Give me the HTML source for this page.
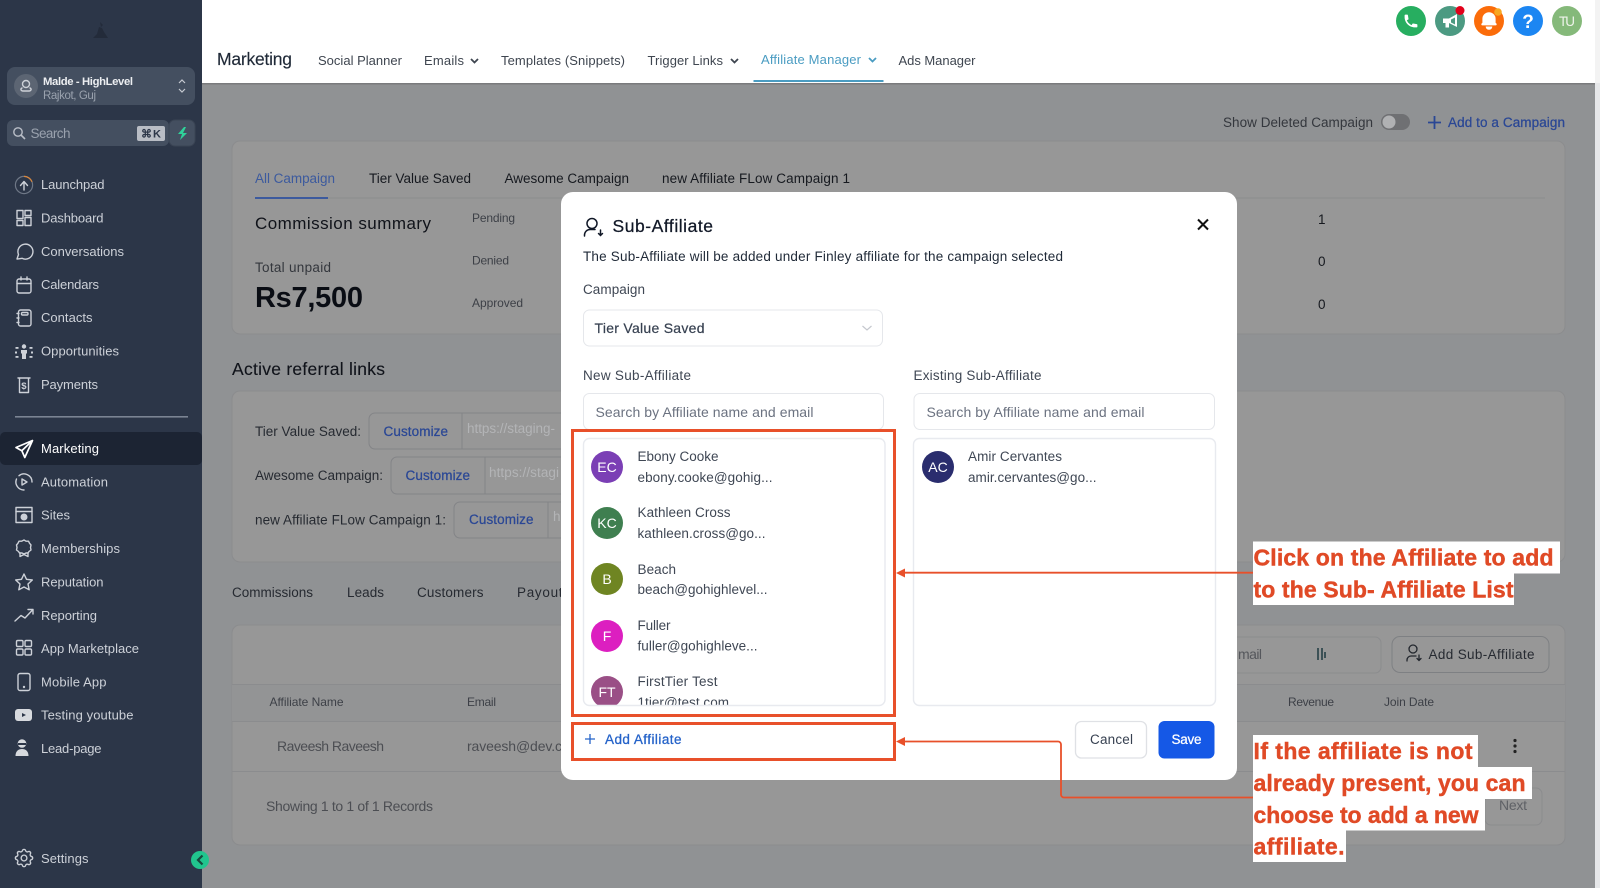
<!DOCTYPE html>
<html lang="en"><head><meta charset="utf-8"><title>Marketing - Sub-Affiliate</title>
<style>
html,body{margin:0;padding:0;width:1600px;height:888px;overflow:hidden;background:#909294}
svg{display:block;font-family:"Liberation Sans",sans-serif;filter:blur(.3px)}
.n{font-size:13px;fill:#cdd1d8}
.i{fill:none;stroke:#cdd1d8;stroke-width:1.4;stroke-linecap:round;stroke-linejoin:round}
.t{font-size:13.5px;fill:#16191f}
.g{font-size:13.5px;fill:#34373d}
.s{font-size:12px;fill:#3d4047}
.h{font-size:13px;fill:#3f4650}
.b{font-size:13.5px;fill:#2a4795;stroke:#2a4795;stroke-width:.25}
.m{font-size:13.5px;fill:#1f2937}
.l{font-size:13.5px;fill:#3f4754}
.p{font-size:14px;fill:#6b7280}
.a{font-size:14px;fill:#fff}
.x{font-size:23px;font-weight:bold;fill:#e04a26;stroke:#e04a26;stroke-width:.45}
.r{fill:#979797;stroke:#8b8c8e;stroke-width:1}
</style></head><body>
<svg width="1600" height="888" viewBox="0 0 1600 888" xmlns="http://www.w3.org/2000/svg">
<defs><clipPath id="c1"><rect x="583" y="438" width="302" height="267" rx="6"/></clipPath></defs>

<!-- page -->
<rect width="1600" height="888" fill="#909294"/>
<rect x="1595" y="83" width="5" height="805" fill="#e6e7e9"/>

<!-- sidebar -->
<rect width="202" height="888" fill="#2c3648"/>
<path d="M93 38l4-4 2-7 3 1 2 4 4 6zM100 22l3 3-2 2z" fill="#232b3a"/>
<rect x="7" y="67" width="188" height="38" rx="8" fill="#444f60"/>
<circle cx="26" cy="86" r="12" fill="#5c6573"/>
<g class="i" stroke-width="1.2"><circle cx="26" cy="84" r="3.5"/><path d="M22 88c-2 1-1 3 1 3h6c2 0 3-2 1-3"/></g>
<text x="43" y="85" font-size="11.300" font-weight="bold" fill="#eceef1" textLength="90">Malde - HighLevel</text>
<text x="43" y="99" font-size="11.500" fill="#9aa2ae" textLength="53">Rajkot, Guj</text>
<path d="M179 83l3-3 3 3M179 89l3 3 3-3" fill="none" stroke="#c6cad1" stroke-width="1.2"/>
<rect x="7" y="120" width="162" height="26" rx="6" fill="#444f60"/>
<rect x="169" y="120" width="26" height="26" rx="6" fill="#444f60" stroke="#3a4454"/>
<circle cx="18" cy="132" r="4.2" fill="none" stroke="#b9bec7" stroke-width="1.4"/><path d="M21 135l4 4" stroke="#b9bec7" stroke-width="1.6"/>
<text x="30.500" y="138" font-size="13.500" fill="#9aa2ae" textLength="40">Search</text>
<rect x="137" y="126" width="28" height="15" rx="2" fill="#b9bdc5"/>
<text x="141" y="137.5" font-size="11" fill="#2c3648" textLength="20" font-weight="bold">⌘ K</text>
<path d="M184 127l-6 7h4l-2 6 7-7h-4l3-6z" fill="#2fd39a"/>

<!-- nav -->
<text class="n" x="41" y="189" textLength="63.500">Launchpad</text>
<text class="n" x="41" y="222.5" textLength="62.500">Dashboard</text>
<text class="n" x="41" y="256" textLength="83">Conversations</text>
<text class="n" x="41" y="289" textLength="58">Calendars</text>
<text class="n" x="41" y="322" textLength="51.500">Contacts</text>
<text class="n" x="41" y="355.500" textLength="78">Opportunities</text>
<text class="n" x="41" y="389" textLength="57">Payments</text>
<rect x="15" y="416" width="173" height="1.6" fill="#7b8493"/>
<rect x="0" y="432" width="202" height="33" rx="5" fill="#1c2433"/>
<text class="n" x="41" y="453" textLength="58" style="fill:#fff">Marketing</text>
<text class="n" x="41" y="486.500" textLength="67">Automation</text>
<text class="n" x="41" y="519.500" textLength="29">Sites</text>
<text class="n" x="41" y="553" textLength="79">Memberships</text>
<text class="n" x="41" y="586.500" textLength="62.500">Reputation</text>
<text class="n" x="41" y="620" textLength="56">Reporting</text>
<text class="n" x="41" y="653" textLength="98">App Marketplace</text>
<text class="n" x="41" y="686.500" textLength="65.500">Mobile App</text>
<text class="n" x="41" y="719.500" textLength="92.500">Testing youtube</text>
<text class="n" x="41" y="753" textLength="60.500">Lead-page</text>
<text class="n" x="41" y="863" textLength="47.500">Settings</text>

<!-- nav icons -->
<g transform="translate(14 175)"><circle cx="10" cy="10" r="8.6" fill="none" stroke="#6e7786" stroke-width="1.2"/><path d="M10 1.4a8.6 8.6 0 0 1 8 5.4" fill="none" stroke="#d9853a" stroke-width="1.3"/><path class="i" d="M10 15V8M6.5 10.5L10 6.5l3.500 4"/></g>
<g class="i" transform="translate(14 208)"><rect x="3" y="2.500" width="6" height="8" /><rect x="11" y="2.500" width="6" height="5"/><rect x="3" y="12.500" width="6" height="5"/><rect x="11" y="9.500" width="6" height="8"/></g>
<path class="i" transform="translate(14 241)" d="M3 18l1.500-4.500A7.500 7.500 0 1 1 8 17.300c-1.700.3-3.200.6-5 .7z"/>
<g class="i" transform="translate(14 275)"><rect x="3" y="4" width="14" height="14" rx="2"/><path d="M3 8.500h14M7 2v3M13 2v3"/></g>
<g class="i" transform="translate(14 308)"><rect x="4.500" y="2" width="12.500" height="16" rx="2"/><rect x="7.500" y="4.500" width="6.500" height="2.500" rx="1"/><path d="M3 5.500h2M3 10h2M3 14.500h2"/></g>
<g transform="translate(14 342)" fill="#cdd1d8"><circle cx="10" cy="4.500" r="2.200"/><path d="M7 8h6v3l-1 1v5H8v-5l-1-1z"/><rect x="1.500" y="5" width="3" height="1.800"/><rect x="15.500" y="5" width="3" height="1.800"/><rect x="1" y="9.500" width="2" height="2"/><rect x="17" y="9.500" width="2" height="2"/><rect x="1.500" y="14" width="3" height="1.800"/><rect x="15.500" y="14" width="3" height="1.800"/></g>
<g transform="translate(14 375)"><path class="i" d="M4 3h12M5.500 3v14.500h9V3"/><text x="7.300" y="14" font-size="9.500" font-weight="bold" fill="#cdd1d8">$</text></g>
<path transform="translate(14 439)" d="M18.500 1.500L2 8.500l5.800 3.200 3 6.800zM7.800 11.700L18.500 1.500" fill="none" stroke="#fff" stroke-width="1.700" stroke-linejoin="round"/>
<g class="i" transform="translate(14 472)"><path d="M18 10A8 8 0 0 0 5 3.700M2.500 7A8 8 0 0 0 10 18"/><path d="M8 7l5 3-5 3z"/></g>
<g class="i" transform="translate(14 505)"><rect x="2" y="2.500" width="16" height="15"/><path d="M2 6.500h16"/><circle cx="10" cy="12" r="2.800" fill="#cdd1d8"/></g>
<g class="i" transform="translate(14 538)"><path d="M10 2l2 1.200h2.500l1 2 1.500 1.800-.5 2.500.5 2.500-2 1.500-1 1.500H12l-2 1-2-1H5.500l-1-1.500-2-1.500L3 9.500 2.500 7 4 5.200l1-2h2.500z"/><path d="M6 15v3.500l4-2 4 2V15"/></g>
<path class="i" transform="translate(14 572)" d="M10 2l2.500 5.300 5.800.7-4.300 4 1.200 5.800L10 15l-5.200 2.800L6 12 1.700 8l5.800-.7z"/>
<path class="i" transform="translate(14 605)" d="M1 16l6-5.500 4 2.500 7.500-8M14 4.500h5v4.500"/>
<g class="i" transform="translate(14 638)"><rect x="2.500" y="2.500" width="6.500" height="6" rx="1.300"/><rect x="11" y="2.500" width="6.500" height="6" rx="1.300"/><rect x="2.500" y="11" width="6.500" height="6" rx="1.300"/><rect x="11" y="11" width="6.500" height="6" rx="1.300"/></g>
<g class="i" transform="translate(14 672)"><rect x="4" y="1.500" width="12" height="17" rx="2"/><circle cx="10" cy="15" r=".5"/></g>
<g transform="translate(14 705)"><rect x="1" y="4" width="17" height="12" rx="3" fill="#d7dade"/><path d="M8 8l4 2-4 2z" fill="#2c3648"/></g>
<g transform="translate(14 738)" fill="#d7dade"><circle cx="8" cy="5.500" r="4.300"/><rect x="4" y="5" width="8" height="2" fill="#2c3648"/><path d="M1.500 18c0-5 3-7 6.500-7s6.500 2 6.500 7z"/></g>
<g transform="translate(12.500 846.500) scale(.96)"><path class="i" d="M10.325 4.317c.426-1.756 2.924-1.756 3.350 0a1.724 1.724 0 002.573 1.066c1.543-.94 3.310.826 2.370 2.370a1.724 1.724 0 001.065 2.572c1.756.426 1.756 2.924 0 3.350a1.724 1.724 0 00-1.066 2.573c.94 1.543-.826 3.310-2.370 2.370a1.724 1.724 0 00-2.572 1.065c-.426 1.756-2.924 1.756-3.350 0a1.724 1.724 0 00-2.573-1.066c-1.543.94-3.310-.826-2.370-2.370a1.724 1.724 0 00-1.065-2.572c-1.756-.426-1.756-2.924 0-3.350a1.724 1.724 0 001.066-2.573c-.94-1.543.826-3.310 2.370-2.370.996.608 2.296.07 2.572-1.065z"/><circle class="i" cx="12" cy="12" r="3"/></g>

<!-- header -->
<rect x="202" y="0" width="1393" height="83" fill="#fff"/>
<rect x="1595" y="0" width="5" height="83" fill="#f3f3f3"/>
<rect x="202" y="83" width="1393" height="1.500" fill="#7a7b7d"/>
<text x="217" y="65" font-size="17.500" fill="#1f2937" textLength="75" style="stroke:#1f2937;stroke-width:.15">Marketing</text>
<text class="h" x="318" y="65" textLength="84">Social Planner</text>
<text class="h" x="424" y="65" textLength="40">Emails</text>
<path d="M471 59l3.500 3.500L478 59" fill="none" stroke="#3f4650" stroke-width="1.800"/>
<text class="h" x="501" y="65" textLength="124">Templates (Snippets)</text>
<text class="h" x="647.500" y="65" textLength="75.500">Trigger Links</text>
<path d="M731 59l3.500 3.500L738 59" fill="none" stroke="#3f4650" stroke-width="1.800"/>
<text class="h" x="761" y="64" textLength="100" style="fill:#4a9cc2">Affiliate Manager</text>
<path d="M869 58l3.500 3.500L876 58" fill="none" stroke="#4a9cc2" stroke-width="1.800"/>
<rect x="753.500" y="80" width="130" height="2" fill="#4a9cc2"/>
<text class="h" x="898.500" y="65" textLength="77">Ads Manager</text>

<!-- top icons -->
<circle cx="1411" cy="21" r="15" fill="#27ae60"/>
<path transform="translate(1403 13) scale(.8)" d="M2 3a1 1 0 011-1h2.153a1 1 0 01.986.836l.74 4.435a1 1 0 01-.54 1.060l-1.548.773a11.037 11.037 0 006.105 6.105l.774-1.548a1 1 0 011.059-.54l4.435.74a1 1 0 01.836.986V17a1 1 0 01-1 1h-2C7.820 18 2 12.180 2 5V3z" fill="#fff"/>
<circle cx="1450" cy="21" r="15" fill="#4c9a82"/>
<path d="M1443 18.500h6l8-4.500v13l-8-4v4.500h-3.500V23h-2.500z" fill="#fff"/><path d="M1451 19.500l4-2v7l-4-2z" fill="#4c9a82"/>
<circle cx="1460" cy="10.500" r="4.500" fill="#e2001a"/>
<circle cx="1489" cy="21" r="15" fill="#fb6c0a"/>
<path transform="translate(1478 10) scale(1.100)" d="M10 2a6 6 0 00-6 6v3.586l-.707.707A1 1 0 004 14h12a1 1 0 00.707-1.707L16 11.586V8a6 6 0 00-6-6zM10 18a3 3 0 01-3-3h6a3 3 0 01-3 3z" fill="#fff"/>
<circle cx="1498" cy="12" r="3.800" fill="#f7a823"/>
<circle cx="1528" cy="21" r="15" fill="#1c86f2"/>
<text x="1528" y="28" font-size="19" font-weight="bold" fill="#fff" text-anchor="middle">?</text>
<circle cx="1567" cy="21" r="15" fill="#85b97a"/>
<text x="1567" y="26" font-size="13.500" fill="#eef3ea" text-anchor="middle" textLength="16">TU</text>

<!-- toolbar -->
<text class="g" x="1223" y="127" textLength="150">Show Deleted Campaign</text>
<rect x="1381" y="114" width="29" height="16" rx="8" fill="#6f7073"/>
<circle cx="1389" cy="122" r="6.500" fill="#b0b1b3"/>
<path d="M1434.500 116v13M1428 122.500h13" stroke="#2a4795" stroke-width="1.800"/>
<text class="b" x="1448" y="127" textLength="117">Add to a Campaign</text>

<!-- card 1 -->
<rect class="r" x="232" y="141" width="1333" height="193" rx="8"/>
<rect x="255" y="197.500" width="1290" height="1" fill="#8b8c8e"/>
<rect x="255" y="197" width="73" height="2" fill="#3c5a9e"/>
<text class="t" x="255" y="183" textLength="80" style="fill:#3c5a9e">All Campaign</text>
<text class="t" x="369" y="183" textLength="102">Tier Value Saved</text>
<text class="t" x="504.500" y="183" textLength="124.500">Awesome Campaign</text>
<text class="t" x="662" y="183" textLength="188">new Affiliate FLow Campaign 1</text>
<text x="255" y="229" font-size="17" fill="#10131a" textLength="176">Commission summary</text>
<text class="s" x="472" y="222" textLength="43">Pending</text>
<text class="s" x="472" y="264.500" textLength="37">Denied</text>
<text class="s" x="472" y="307" textLength="51">Approved</text>
<text class="g" x="255" y="272" textLength="76">Total unpaid</text>
<text x="255" y="307" font-size="29" font-weight="bold" fill="#0a0d14" textLength="108">Rs7,500</text>
<text class="t" x="1318" y="224">1</text><text class="t" x="1318" y="266">0</text><text class="t" x="1318" y="309">0</text>

<!-- referral links -->
<text x="232" y="375" font-size="17.500" fill="#10131a" textLength="153" style="stroke:#10131a;stroke-width:.12">Active referral links</text>
<rect class="r" x="232" y="391" width="1333" height="171" rx="8"/>
<text class="t" x="255" y="436" textLength="106" style="fill:#262a31">Tier Value Saved:</text>
<text class="t" x="255" y="480" textLength="128" style="fill:#262a31">Awesome Campaign:</text>
<text class="t" x="255" y="524.500" textLength="191" style="fill:#262a31">new Affiliate FLow Campaign 1:</text>
<g fill="#979797" stroke="#838487"><rect x="369" y="413" width="215" height="36" rx="6"/><path d="M462 413v36"/>
<rect x="391" y="457" width="193" height="37" rx="6"/><path d="M485 457v37"/>
<rect x="454" y="502" width="130" height="36" rx="6"/><path d="M548 502v36"/></g>
<text class="b" x="383.500" y="436" textLength="64.500">Customize</text>
<text class="b" x="405.500" y="480" textLength="64.500">Customize</text>
<text class="b" x="469" y="524" textLength="64.500">Customize</text>
<text x="467" y="433" font-size="13.500" fill="#b3b4b6" textLength="88">https://staging-</text>
<text x="489" y="477" font-size="13.500" fill="#b3b4b6" textLength="70">https://stagi</text>
<text x="553" y="521" font-size="13.500" fill="#b3b4b6">h</text>

<!-- lower tabs -->
<text class="t" x="232" y="597" textLength="81" style="fill:#262a31">Commissions</text>
<text class="t" x="347" y="597" textLength="37" style="fill:#262a31">Leads</text>
<text class="t" x="417" y="597" textLength="66.500" style="fill:#262a31">Customers</text>
<text class="t" x="517" y="597" textLength="53" style="fill:#262a31">Payouts</text>

<!-- table card -->
<rect class="r" x="232" y="625" width="1333" height="220" rx="8"/>
<rect x="232" y="684" width="1333" height="37" fill="#939495"/>
<path d="M232 684.500h1333M232 721.500h1333M232 771.500h1333" stroke="#8b8c8e"/>
<text class="s" x="269.500" y="706" textLength="74">Affiliate Name</text>
<text class="s" x="467" y="706" textLength="29">Email</text>
<text class="s" x="1288" y="706" textLength="46">Revenue</text>
<text class="s" x="1384" y="706" textLength="50">Join Date</text>
<text x="277" y="751" font-size="14" fill="#4c4e53" textLength="107">Raveesh Raveesh</text>
<text x="467" y="751" font-size="14" fill="#4c4e53" textLength="95">raveesh@dev.c</text>
<text x="266" y="811" font-size="14" fill="#4c4e53" textLength="167">Showing 1 to 1 of 1 Records</text>
<rect x="1100" y="637" width="281" height="36" rx="6" fill="#979797" stroke="#8b8c8e"/>
<text x="1238" y="659" font-size="14" fill="#55575c" textLength="24">mail</text>
<path d="M1318 648v12M1322 648v12M1325 652v6" stroke="#1f3a40" stroke-width="1.500"/>
<rect x="1392" y="636.500" width="157" height="36" rx="8" fill="#979797" stroke="#7e8083"/>
<g fill="none" stroke="#22262d" stroke-width="1.300" stroke-linecap="round"><circle cx="1413" cy="649" r="4"/><path d="M1407 661v-1a4 4 0 0 1 4-4h5M1419 655v5M1417 658.500l2 2 2-2"/></g>
<text class="g" x="1428.500" y="659" textLength="106" style="fill:#262a31">Add Sub-Affiliate</text>
<rect x="1485" y="788" width="57" height="37" rx="6" fill="#979797" stroke="#8b8c8e"/>
<text x="1499" y="810" font-size="14" fill="#5f6166" textLength="28">Next</text>
<g fill="#222"><circle cx="1515" cy="740.500" r="1.600"/><circle cx="1515" cy="746" r="1.600"/><circle cx="1515" cy="751.500" r="1.600"/></g>

<!-- sidebar toggle -->
<circle cx="200" cy="860" r="9" fill="#21c58e"/>
<path d="M202.500 855.500L198 860l4.500 4.500" fill="none" stroke="#174a3e" stroke-width="2.200"/>

<!-- modal -->
<rect x="561" y="192" width="676" height="588" rx="12" fill="#fff"/>
<g fill="none" stroke="#111827" stroke-width="1.500" stroke-linecap="round"><circle cx="592" cy="223.500" r="5"/><path d="M584.500 236v-1a5.500 5.500 0 0 1 5.500-5.500h5M600.500 230v5.500M598.500 233.500l2 2 2-2"/></g>
<text x="612.500" y="232" font-size="17.500" fill="#111827" textLength="100.500" style="stroke:#111827;stroke-width:.25">Sub-Affiliate</text>
<path d="M1198 219.500l10 10M1208 219.500l-10 10" stroke="#111" stroke-width="2"/>
<text x="583" y="261" font-size="13.500" fill="#1f2937" textLength="480">The Sub-Affiliate will be added under Finley affiliate for the campaign selected</text>
<text class="l" x="583" y="294" textLength="62">Campaign</text>
<rect x="583.500" y="310" width="299" height="36" rx="6" fill="#fff" stroke="#e5e7eb"/>
<text x="594.500" y="333" font-size="14" fill="#374151" textLength="110" style="stroke:#374151;stroke-width:.2">Tier Value Saved</text>
<path d="M862.500 326l4.500 4 4.500-4" fill="none" stroke="#c5c8ce" stroke-width="1.200"/>
<text class="l" x="583" y="380" textLength="108">New Sub-Affiliate</text>
<text class="l" x="913.500" y="380" textLength="128">Existing Sub-Affiliate</text>
<rect x="583.500" y="393.500" width="300" height="36" rx="6" fill="#fff" stroke="#e5e7eb"/>
<rect x="914" y="393.500" width="300.500" height="36" rx="6" fill="#fff" stroke="#e5e7eb"/>
<text class="p" x="595.500" y="417" textLength="218">Search by Affiliate name and email</text>
<text class="p" x="926.500" y="417" textLength="218">Search by Affiliate name and email</text>

<g clip-path="url(#c1)">
<circle cx="607" cy="467" r="16" fill="#7b3fb5"/><text class="a" x="607" y="472" text-anchor="middle">EC</text>
<circle cx="607" cy="523" r="16" fill="#3f7f50"/><text class="a" x="607" y="528" text-anchor="middle">KC</text>
<circle cx="607" cy="579" r="16" fill="#6f8522"/><text class="a" x="607" y="584" text-anchor="middle">B</text>
<circle cx="607" cy="636" r="16" fill="#dc1fc0"/><text class="a" x="607" y="641" text-anchor="middle">F</text>
<circle cx="607" cy="692" r="16" fill="#9a4f86"/><text class="a" x="607" y="697" text-anchor="middle">FT</text>
<text class="l" x="637.500" y="461" textLength="81">Ebony Cooke</text><text class="l" x="637.500" y="482" textLength="135">ebony.cooke@gohig...</text>
<text class="l" x="637.500" y="517" textLength="93">Kathleen Cross</text><text class="l" x="637.500" y="538" textLength="128">kathleen.cross@go...</text>
<text class="l" x="637.500" y="574" textLength="38.500">Beach</text><text class="l" x="637.500" y="594" textLength="130">beach@gohighlevel...</text>
<text class="l" x="637.500" y="630" textLength="33">Fuller</text><text class="l" x="637.500" y="650.500" textLength="120">fuller@gohighleve...</text>
<text class="l" x="637.500" y="686" textLength="80">FirstTier Test</text><text class="l" x="637.500" y="707" textLength="91.500">1tier@test.com</text>
</g>
<rect x="583.500" y="438.500" width="301.500" height="267" rx="6" fill="none" stroke="#e8eaef" stroke-width="1.400"/>
<rect x="913.500" y="438.500" width="302" height="267" rx="6" fill="none" stroke="#e8eaef" stroke-width="1.400"/>
<circle cx="938" cy="467" r="16" fill="#2a2d6e"/><text class="a" x="938" y="472" text-anchor="middle">AC</text>
<text class="l" x="968" y="461" textLength="94">Amir Cervantes</text><text class="l" x="968" y="482" textLength="128.500">amir.cervantes@go...</text>

<path d="M590 734v10M585 739h10" stroke="#2563c9" stroke-width="1.300"/>
<text x="605" y="744" font-size="13.500" fill="#2563c9" textLength="76.500" style="stroke:#2563c9;stroke-width:.3">Add Affiliate</text>
<rect x="1075.500" y="721.500" width="71" height="36.500" rx="6" fill="#fff" stroke="#dfe1e5" stroke-width="1.300"/>
<text x="1090" y="744" font-size="13.500" fill="#374151" textLength="43">Cancel</text>
<rect x="1158.500" y="721" width="56" height="37.500" rx="6" fill="#1558e6"/>
<text x="1171.500" y="744" font-size="13.500" fill="#fff" textLength="30" style="stroke:#fff;stroke-width:.25">Save</text>

<!-- annotations -->
<rect x="572.500" y="430.500" width="322" height="285" fill="none" stroke="#e8502a" stroke-width="3"/>
<rect x="572.500" y="723.500" width="322" height="36" fill="none" stroke="#e8502a" stroke-width="3"/>
<path d="M905 572.700H1253" stroke="#e8502a" stroke-width="1.800"/>
<path d="M896 573l9-4.500v9z" fill="#e8502a"/>
<path d="M905 741.500h153a3 3 0 0 1 3 3v50a3 3 0 0 0 3 3H1253" fill="none" stroke="#e8502a" stroke-width="1.800"/>
<path d="M896 741.500l9-4.500v9z" fill="#e8502a"/>

<g fill="#fff">
<rect x="1253" y="541.500" width="307" height="32"/><rect x="1253" y="573" width="261" height="32"/>
<rect x="1253" y="735" width="225" height="32.500"/><rect x="1253" y="767" width="279" height="32"/>
<rect x="1253" y="798.500" width="232" height="32"/><rect x="1253" y="830" width="93" height="32"/>
</g>
<text class="x" x="1253.500" y="565.500" textLength="300">Click on the Affiliate to add</text>
<text class="x" x="1253.500" y="597.500" textLength="260">to the Sub- Affiliate List</text>
<text class="x" x="1253.500" y="759" textLength="219">If the affiliate is not</text>
<text class="x" x="1253.500" y="791" textLength="272">already present, you can</text>
<text class="x" x="1253.500" y="823" textLength="225">choose to add a new</text>
<text class="x" x="1253.500" y="854.500" textLength="91">affiliate.</text>
</svg>
</body></html>
